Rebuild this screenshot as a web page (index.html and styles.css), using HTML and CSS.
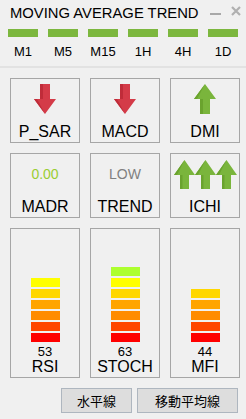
FILE: index.html
```html
<!DOCTYPE html>
<html>
<head>
<meta charset="utf-8">
<link rel="stylesheet" href="styles.css">
</head>
<body>
<div class="panel">
  <div class="title-row">
    <span class="title">MOVING AVERAGE TREND</span>
    <span class="ctrls">
      <svg class="ctrl-min" width="11" height="4" viewBox="0 0 11 4"><rect x="0" y="1" width="11" height="2" fill="#a8a8a8"/></svg>
      <svg class="ctrl-close" width="10" height="10" viewBox="0 0 10 10"><path d="M1 1 L9 9 M9 1 L1 9" stroke="#b0b0b0" stroke-width="2.2"/></svg>
    </span>
  </div>
  <div class="tf">
    <div class="tf-item"><div class="tf-bar"></div><div class="tf-label">M1</div></div>
    <div class="tf-item"><div class="tf-bar"></div><div class="tf-label">M5</div></div>
    <div class="tf-item"><div class="tf-bar"></div><div class="tf-label">M15</div></div>
    <div class="tf-item"><div class="tf-bar"></div><div class="tf-label">1H</div></div>
    <div class="tf-item"><div class="tf-bar"></div><div class="tf-label">4H</div></div>
    <div class="tf-item"><div class="tf-bar"></div><div class="tf-label">1D</div></div>
  </div>
  <div class="sep"></div>
  <div class="grid">
    <div class="box small">
      <div class="icon">
        <svg width="22" height="30" viewBox="0 0 22 30"><path d="M6 0 H16 V15 H22 L11 30 L0 15 H6 Z" fill="#d43b48"/><path d="M6 0 H9 V15 H3 L11 30 L0 15 H6 Z" fill="#bf2c39"/></svg>
      </div>
      <div class="label">P_SAR</div>
    </div>
    <div class="box small">
      <div class="icon">
        <svg width="22" height="30" viewBox="0 0 22 30"><path d="M6 0 H16 V15 H22 L11 30 L0 15 H6 Z" fill="#d43b48"/><path d="M6 0 H9 V15 H3 L11 30 L0 15 H6 Z" fill="#bf2c39"/></svg>
      </div>
      <div class="label">MACD</div>
    </div>
    <div class="box small">
      <div class="icon">
        <svg width="22" height="30" viewBox="0 0 22 30"><path d="M11 0 L22 15 H16 V30 H6 V15 H0 Z" fill="#7ab53c"/><path d="M11 0 L0 15 H6 V30 H9 V15 H3 Z" fill="#6aa32e"/></svg>
      </div>
      <div class="label">DMI</div>
    </div>

    <div class="box small">
      <div class="icon"><span class="value val-green">0.00</span></div>
      <div class="label">MADR</div>
    </div>
    <div class="box small">
      <div class="icon"><span class="value val-gray">LOW</span></div>
      <div class="label">TREND</div>
    </div>
    <div class="box small">
      <div class="icon ichi">
        <svg width="21" height="29" viewBox="0 0 21 29"><path d="M10.5 0 L21 15 H15 V29 H6 V15 H0 Z" fill="#7ab53c"/><path d="M10.5 0 L0 15 H6 V29 H8.5 V15 H3 Z" fill="#6aa32e"/></svg>
        <svg width="21" height="29" viewBox="0 0 21 29"><path d="M10.5 0 L21 15 H15 V29 H6 V15 H0 Z" fill="#7ab53c"/><path d="M10.5 0 L0 15 H6 V29 H8.5 V15 H3 Z" fill="#6aa32e"/></svg>
        <svg width="21" height="29" viewBox="0 0 21 29"><path d="M10.5 0 L21 15 H15 V29 H6 V15 H0 Z" fill="#7ab53c"/><path d="M10.5 0 L0 15 H6 V29 H8.5 V15 H3 Z" fill="#6aa32e"/></svg>
      </div>
      <div class="label">ICHI</div>
    </div>

    <div class="box tall">
      <div class="bars">
        <div class="bar c-yellow"></div>
        <div class="bar c-gold"></div>
        <div class="bar c-orange"></div>
        <div class="bar c-darkorange"></div>
        <div class="bar c-orangered"></div>
        <div class="bar c-red"></div>
      </div>
      <div class="num">53</div>
      <div class="label">RSI</div>
    </div>
    <div class="box tall">
      <div class="bars">
        <div class="bar c-greenyellow"></div>
        <div class="bar c-yellow"></div>
        <div class="bar c-gold"></div>
        <div class="bar c-orange"></div>
        <div class="bar c-darkorange"></div>
        <div class="bar c-orangered"></div>
        <div class="bar c-red"></div>
      </div>
      <div class="num">63</div>
      <div class="label">STOCH</div>
    </div>
    <div class="box tall">
      <div class="bars">
        <div class="bar c-gold"></div>
        <div class="bar c-orange"></div>
        <div class="bar c-darkorange"></div>
        <div class="bar c-orangered"></div>
        <div class="bar c-red"></div>
      </div>
      <div class="num">44</div>
      <div class="label">MFI</div>
    </div>
  </div>
  <div class="buttons">
    <button class="btn btn-a">水平線</button>
    <button class="btn btn-b">移動平均線</button>
  </div>
</div>
</body>
</html>
```

FILE: styles.css
```css
html, body {
  margin: 0;
  padding: 0;
  background: #f0f0f0;
}
body {
  font-family: "Liberation Sans", Arial, sans-serif;
  color: #000;
  width: 246px;
  height: 419px;
  overflow: hidden;
}
.panel {
  display: flex;
  flex-direction: column;
}
.title-row {
  display: flex;
  align-items: center;
  height: 16px;
  padding: 5px 5px 0 10px;
}
.title {
  font-size: 14.8px;
  line-height: 16px;
  white-space: nowrap;
  flex: 1;
}
.ctrls {
  display: flex;
  align-items: center;
  gap: 10px;
}
.ctrl-min { display: block; margin-top: 2px; }
.ctrl-close { display: block; margin-top: -4px; }
.tf {
  display: grid;
  grid-template-columns: repeat(6, 30px);
  column-gap: 10px;
  padding-left: 8px;
  margin-top: 8px;
}
.tf-item {
  display: flex;
  flex-direction: column;
  align-items: center;
}
.tf-bar {
  width: 30px;
  height: 8px;
  background: #7cb73e;
}
.tf-label {
  font-size: 13px;
  line-height: 15px;
  margin-top: 7px;
}
.sep {
  height: 2px;
  background: #e2e2e2;
  margin-top: 7px;
}
.grid {
  display: grid;
  grid-template-columns: repeat(3, 70px);
  grid-template-rows: 65px 65px 150px;
  gap: 10px;
  padding-left: 10px;
  margin-top: 10px;
}
.box {
  box-sizing: border-box;
  border: 1px solid #a6a6a6;
  display: flex;
  flex-direction: column;
  align-items: center;
}
.small .icon {
  height: 30px;
  margin-top: 5px;
  display: flex;
  align-items: center;
  justify-content: center;
}
.icon svg { display: block; }
.value {
  font-size: 14px;
  line-height: 16px;
}
.val-green { color: #9acd32; }
.val-gray { color: #808080; }
.label {
  margin-top: auto;
  font-size: 16px;
  line-height: 16px;
  padding-bottom: 2px;
}
.tall {
  justify-content: flex-end;
}
.bars {
  display: flex;
  flex-direction: column;
  gap: 2px;
}
.bar {
  width: 29px;
  height: 9px;
}
.c-red { background: #ff0000; }
.c-orangered { background: #ff4500; }
.c-darkorange { background: #ff8c00; }
.c-orange { background: #ffa500; }
.c-gold { background: #ffd700; }
.c-yellow { background: #ffff00; }
.c-greenyellow { background: #adff2f; }
.num {
  font-size: 13px;
  line-height: 12px;
  margin-top: 4px;
}
.tall .label {
  margin-top: 1px;
  line-height: 15px;
  padding-bottom: 3px;
}
.buttons {
  display: flex;
  justify-content: flex-end;
  gap: 5px;
  padding-right: 8px;
  margin-top: 10px;
}
.btn {
  box-sizing: border-box;
  height: 25px;
  background: #dddddd;
  border: 1px solid #aeb6bf;
  border-radius: 0;
  font-family: "Noto Sans CJK JP", sans-serif;
  font-size: 13px;
  color: #000;
  padding: 0;
  line-height: 1;
}
.btn-a { width: 71px; }
.btn-b { width: 101px; }
```
